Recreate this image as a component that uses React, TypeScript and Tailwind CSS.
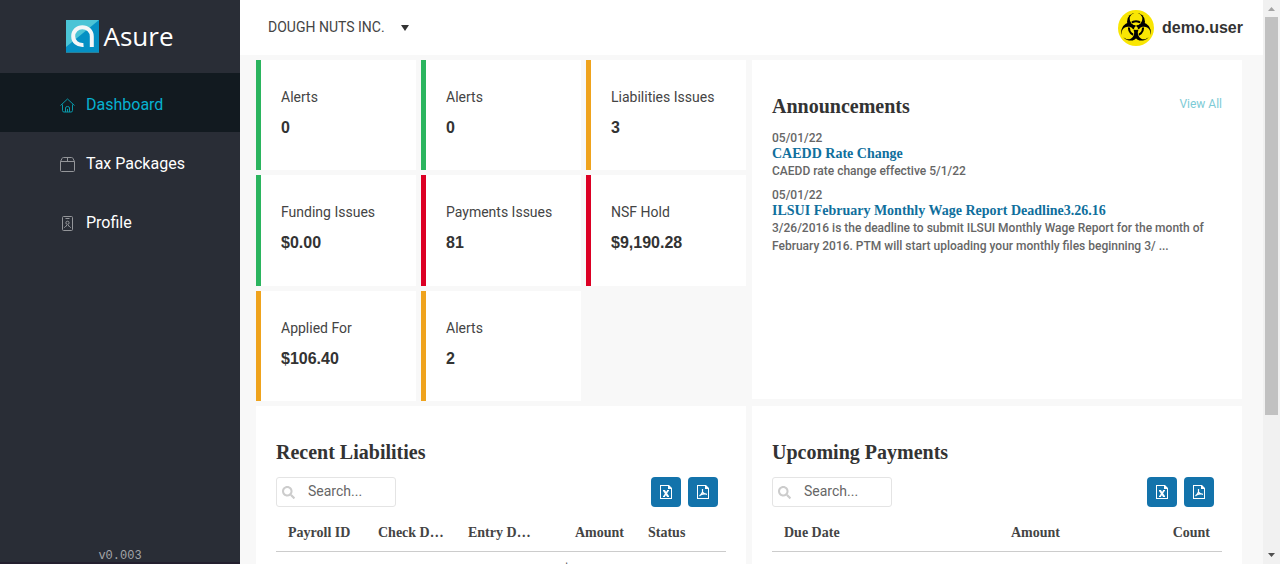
import type { ReactNode } from "react";
import { FaSearch } from "react-icons/fa";

function AsureMark() {
  return (
    <svg width="33" height="33" viewBox="0 0 33 33" aria-hidden="true">
      <rect width="33" height="33" fill="#0590c4" />
      <path d="M0 0H33L0 27Z" fill="#4bc4d6" />
      <path d="M0 32H33V33H0Z" fill="#2c7f97" />
      <path
        d="M17.5 25C11.500 25.500 7.200 21.500 7.200 16.200C7.200 11 11.300 7.200 16.300 7.200C21.500 7.200 25.800 11 25.800 16.500V27"
        fill="none"
        stroke="#f4f6f7"
        strokeWidth="4"
      />
    </svg>
  );
}

function HomeIcon() {
  return (
    <svg width="15" height="15" viewBox="0 0 15 15" fill="none" stroke="currentColor" strokeWidth="1" aria-hidden="true">
      <path d="M0.500 7.500L7.500 1L14.500 7.500M2.500 6.500V12.500Q2.500 14 4 14H11Q12.500 14 12.500 12.500V6.500M5.500 14V10Q5.500 8.500 7.500 8.500Q9.500 8.500 9.500 10V14M7.500 11V14" />
    </svg>
  );
}

function BoxIcon() {
  return (
    <svg width="15" height="15" viewBox="0 0 15 15" fill="none" stroke="currentColor" strokeWidth="1" aria-hidden="true">
      <path d="M0.500 4.500H14.500V13.500Q14.500 14.500 13.500 14.500H1.500Q0.500 14.500 0.500 13.500ZM0.500 4.500L2 1.500Q2.300 0.500 3.500 0.500H11.500Q12.700 0.500 13 1.500L14.500 4.500M7.500 0.500V4.500" />
    </svg>
  );
}

function BadgeIcon() {
  return (
    <svg width="15" height="15" viewBox="0 0 15 15" fill="none" stroke="currentColor" strokeWidth="1" aria-hidden="true">
      <rect x="2.500" y="0.500" width="10" height="14" rx="1" />
      <path d="M5.500 2.500H9.500M4.500 12V11.500Q5 10.500 6.500 10V9M10.500 12V11.500Q10 10.500 8.500 10V9" />
      <circle cx="7.500" cy="6.800" r="1.600" />
    </svg>
  );
}

const turns = ["rotate(0)", "rotate(120)", "rotate(240)"];

function BiohazardAvatar() {
  return (
    <svg width="36" height="36" viewBox="-30 -30.500 60 60" aria-hidden="true">
      <defs>
        <mask id="horns" maskUnits="userSpaceOnUse" x="-30" y="-31" width="60" height="62">
          <rect x="-30" y="-31" width="60" height="62" fill="#fff" />
          {turns.map((t) => (
            <g key={t} transform={t}>
              <circle cy="-15.500" r="10.500" fill="#000" />
              <rect x="-3" y="-30" width="6" height="12" fill="#000" />
              <rect x="-0.700" y="-7" width="1.400" height="7" fill="#000" />
            </g>
          ))}
          <circle r="3" fill="#000" />
        </mask>
        <clipPath id="lobes">
          {turns.map((t) => (
            <circle key={t} cy="-15.500" r="9.300" transform={t} />
          ))}
        </clipPath>
      </defs>
      <circle cy="-0.500" r="30" fill="#f9e603" />
      <g mask="url(#horns)">
        {turns.map((t) => (
          <circle key={t} cy="-11" r="15" transform={t} />
        ))}
      </g>
      <circle r="11.700" fill="none" stroke="#000" strokeWidth="3.500" clipPath="url(#lobes)" />
    </svg>
  );
}

function ExcelIcon() {
  return (
    <svg width="14" height="14" viewBox="0 0 14 14" aria-hidden="true">
      <path d="M1 0H10L13 3V14H1ZM2 1V13H12V4H9V1Z" fill="#fff" fillRule="evenodd" />
      <path d="M4 5.500H6M8 5.500H10M4 11.500H6M8 11.500H10" stroke="#fff" />
      <path d="M5 5.500L9 11.500" stroke="#fff" strokeWidth="2.200" />
      <path d="M9 5.500L5 11.500" stroke="#fff" strokeWidth="1.600" />
    </svg>
  );
}

function PdfIcon() {
  return (
    <svg width="14" height="14" viewBox="0 0 14 14" aria-hidden="true">
      <path d="M1 0H10L13 3V14H1ZM2 1V13H12V4H9V1Z" fill="#fff" fillRule="evenodd" />
      <path d="M6.500 4V7Q6 9 3.500 11M6.500 7Q7.500 9 11 9.300M4.500 9.900Q7 8.800 10 9" fill="none" stroke="#fff" strokeWidth="1.200" />
    </svg>
  );
}

const navItems = [
  { label: "Dashboard", icon: <HomeIcon />, active: true },
  { label: "Tax Packages", icon: <BoxIcon />, active: false },
  { label: "Profile", icon: <BadgeIcon />, active: false },
];

function Sidebar() {
  return (
    <aside className="flex w-60 shrink-0 flex-col border-b-2 border-[#231f2e] bg-[#292d36]">
      <a href="#home" className="flex h-[73px] shrink-0 items-center justify-center gap-1 pb-px font-['Open_Sans',sans-serif] text-[26px] leading-8 text-white">
        <AsureMark />
        Asure
      </a>
      <nav>
        {navItems.map((item) => (
          <a
            key={item.label}
            href={"#" + item.label.toLowerCase().replace(" ", "-")}
            className={
              item.active
                ? "flex h-[59px] items-center gap-[11px] bg-[#121a20] pt-1 pl-[60px] text-base text-[#06b1d0]"
                : "flex h-[59px] items-center gap-[11px] pt-1 pl-[60px] text-base text-white"
            }
          >
            <span className={item.active ? "pt-[2px] text-[#0898a8]" : "pt-[2px] text-[#94969a]"}>{item.icon}</span>
            {item.label}
          </a>
        ))}
      </nav>
      <p className="mt-auto text-center font-['Liberation_Mono',monospace] text-xs leading-3 text-[#a3a5a8]">v0.003</p>
    </aside>
  );
}

const tiles = [
  { label: "Alerts", value: "0", edge: "border-[#2bb55f]" },
  { label: "Alerts", value: "0", edge: "border-[#2bb55f]" },
  { label: "Liabilities Issues", value: "3", edge: "border-[#efa31d]" },
  { label: "Funding Issues", value: "$0.00", edge: "border-[#2bb55f]" },
  { label: "Payments Issues", value: "81", edge: "border-[#dc0024]" },
  { label: "NSF Hold", value: "$9,190.28", edge: "border-[#dc0024]" },
  { label: "Applied For", value: "$106.40", edge: "border-[#efa31d]" },
  { label: "Alerts", value: "2", edge: "border-[#efa31d]" },
];

function Tiles() {
  return (
    <div className="grid min-h-[341px] grid-cols-3 gap-[5px]">
      {tiles.map((tile, i) => (
        <section key={i} className={"border-l-[5px] bg-white px-5 pt-[27px] " + tile.edge}>
          <h3 className="text-sm leading-5 whitespace-nowrap text-[#444]">{tile.label}</h3>
          <p className="mt-[9px] font-['Liberation_Sans',Arial,sans-serif] text-base leading-6 font-bold text-[#333]">{tile.value}</p>
        </section>
      ))}
    </div>
  );
}

const heading = "font-['Liberation_Serif',serif] text-xl leading-6 font-bold text-[#333]";

const news = [
  { date: "05/01/22", title: "CAEDD Rate Change", text: "CAEDD rate change effective 5/1/22" },
  {
    date: "05/01/22",
    title: "ILSUI February Monthly Wage Report Deadline3.26.16",
    text: "3/26/2016 is the deadline to submit ILSUI Monthly Wage Report for the month of February 2016. PTM will start uploading your monthly files beginning 3/ ...",
  },
];

function Announcements() {
  return (
    <section className="mb-[2px] bg-white px-5 pt-[34px] pb-5">
      <div className="flex items-start justify-between">
        <h2 className={heading}>Announcements</h2>
        <a href="#announcements" className="text-xs leading-5 text-[#7dcbd6]">View All</a>
      </div>
      <ul className="mt-3 flex flex-col gap-[7px] text-xs font-medium text-[#666]">
        {news.map((item) => (
          <li key={item.title}>
            <p className="leading-4">{item.date}</p>
            <a href="#article" className="block font-['Liberation_Serif',serif] text-sm leading-[15px] font-bold text-[#0f6f9d]">
              {item.title}
            </a>
            <p className="pt-px leading-[18px]">{item.text}</p>
          </li>
        ))}
      </ul>
    </section>
  );
}

type Column = { label: string; className: string };

function GridPanel({ id, title, columns, children }: { id: string; title: string; columns: Column[]; children: ReactNode }) {
  return (
    <section className="bg-white px-5 pt-[34px] pb-5">
      <h2 className={heading}>{title}</h2>
      <div className="mt-[13px] flex items-center gap-[7px] pr-2">
        <label htmlFor={id} className="mr-auto flex h-[30px] w-[120px] items-center gap-[13px] rounded-[3px] border border-[#e4e4e4] pl-[5px]">
          <FaSearch size={13} className="shrink-0 text-[#ccc]" aria-label="Search" />
          <input id={id} type="search" placeholder="Search..." className="w-full min-w-0 pb-[2px] text-sm outline-none placeholder:text-[#666]" />
        </label>
        <button type="button" aria-label="Export to Excel" className="flex size-[30px] items-center justify-center rounded bg-[#1373ab]">
          <ExcelIcon />
        </button>
        <button type="button" aria-label="Export to PDF" className="flex size-[30px] items-center justify-center rounded bg-[#1373ab]">
          <PdfIcon />
        </button>
      </div>
      <table className="mt-[7px] w-full table-fixed text-sm text-[#555]">
        <thead className="font-['Liberation_Serif',serif] text-[#444]">
          <tr className="border-b border-[#ccc]">
            {columns.map((c) => (
              <th key={c.label} scope="col" className={"truncate px-3 pt-[9px] pb-2 leading-5 font-bold " + c.className}>
                {c.label}
              </th>
            ))}
          </tr>
        </thead>
        <tbody>{children}</tbody>
      </table>
    </section>
  );
}

function Scrollbar() {
  return (
    <div aria-hidden="true" className="flex w-[17px] shrink-0 flex-col items-center bg-[#f1f1f1]">
      <svg width="17" height="17" viewBox="0 0 17 17"><path d="M5 11H12L8.500 7Z" fill="#a3a3a3" /></svg>
      <div className="h-3/4 w-[13px]">
        <div className="h-[94%] bg-[#c1c1c1]" />
      </div>
      <svg className="mt-auto" width="17" height="17" viewBox="0 0 17 17"><path d="M5 6H12L8.500 10Z" fill="#505050" /></svg>
    </div>
  );
}

export default function App() {
  return (
    <div className="flex h-screen overflow-hidden bg-[#f8f8f8] font-[Roboto,sans-serif]">
      <Sidebar />
      <div className="flex min-w-0 flex-1 flex-col">
        <header className="flex h-[55px] shrink-0 items-center justify-between bg-white pr-5 pl-7">
          <button type="button" className="flex items-center gap-4 pb-[2px] text-sm leading-5 text-[#444]">
            DOUGH NUTS INC.
            <svg width="8" height="8" viewBox="0 0 8 8" aria-hidden="true"><path d="M0 2H8L4 8Z" fill="#333" /></svg>
          </button>
          <a href="#account" className="flex items-center gap-2 font-['Liberation_Sans',Arial,sans-serif] text-base font-bold text-[#333]">
            <BiohazardAvatar />
            demo.user
          </a>
        </header>
        <main className="min-h-0 flex-1 overflow-hidden pt-[5px] pr-[21px] pl-4">
          <div className="grid grid-cols-2 gap-x-[6px] gap-y-[5px]">
            <Tiles />
            <Announcements />
            <GridPanel
              id="liability-search"
              title="Recent Liabilities"
              columns={[
                { label: "Payroll ID", className: "w-1/5 text-left" },
                { label: "Check Date", className: "w-1/5 text-left" },
                { label: "Entry Date", className: "w-1/5 text-left" },
                { label: "Amount", className: "w-1/5 text-right" },
                { label: "Status", className: "w-1/5 text-left" },
              ]}
            >
              <tr>
                <td colSpan={3} />
                <td className="px-3 py-2 text-right">$9,190.28</td>
                <td className="px-3 py-2">Check</td>
              </tr>
            </GridPanel>
            <GridPanel
              id="payment-search"
              title="Upcoming Payments"
              columns={[
                { label: "Due Date", className: "w-1/3 text-left" },
                { label: "Amount", className: "w-1/3 text-right" },
                { label: "Count", className: "w-1/3 text-right" },
              ]}
            >
              <tr>
                <td colSpan={3} className="px-3 py-2 text-center">No records available.</td>
              </tr>
            </GridPanel>
          </div>
        </main>
      </div>
      <Scrollbar />
    </div>
  );
}
